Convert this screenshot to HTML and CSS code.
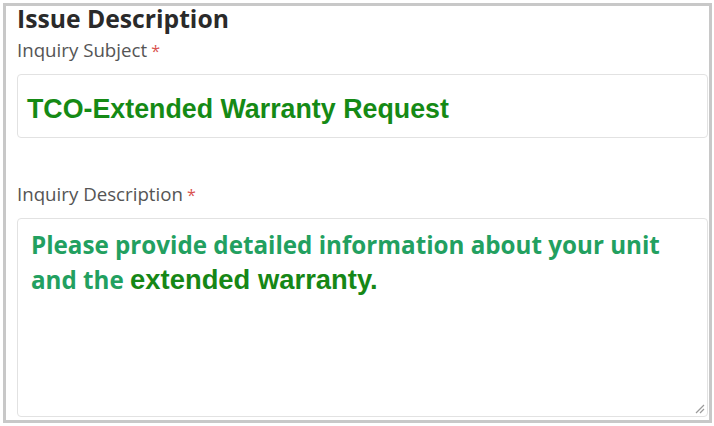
FILE: index.html
```html
<!DOCTYPE html>
<html>
  <head>
    <meta charset="utf-8" />
    <title>Issue Description</title>
    <link rel="stylesheet" href="styles.css">
  </head>
  <body>
    <div class="frame">
      <h2 class="title">Issue Description</h2>

      <div class="field">
        <label class="label">Inquiry Subject<span class="req">*</span></label>
        <div class="input">TCO-Extended Warranty Request</div>
      </div>

      <div class="field field-desc">
        <label class="label">Inquiry Description<span class="req">*</span></label>
        <div class="textarea">
          <p class="desc">Please provide detailed information about your unit<br />and the <span class="desc-alt">extended warranty.</span></p>
          <svg class="grip" width="12" height="12" viewBox="0 0 12 12">
            <path d="M11 3 L3 11 M11 7 L7 11" stroke="#9a9a9a" stroke-width="1.2" fill="none" />
          </svg>
        </div>
      </div>
    </div>
  </body>
</html>
```

FILE: styles.css
```css
html,
body {
  margin: 0;
  padding: 0;
  background: #fff;
}
.frame {
  box-sizing: border-box;
  margin: 3px 2px 0 3px;
  height: 420px;
  border: 3px solid #c8c8c8;
  padding: 0 1px 3px 11px;
  display: flex;
  flex-direction: column;
}
.title {
  margin: -1px 0 0 0;
  font-family: "Open Sans", sans-serif;
  font-size: 24.7px;
  font-weight: 700;
  line-height: 28px;
  color: #2a2a2a;
}
.label {
  display: block;
  margin-top: 5px;
  font-family: "Open Sans", sans-serif;
  font-size: 18.7px;
  line-height: 24px;
  color: #555;
}
.req {
  color: #d9534f;
  margin-left: 4px;
  font-size: 16px;
}
.input {
  box-sizing: border-box;
  margin-top: 11px;
  height: 64px;
  border: 1px solid #e2e2e2;
  border-radius: 4px;
  padding: 6px 9px 0;
  display: flex;
  align-items: center;
  font-family: "Liberation Sans", Arial, sans-serif;
  font-size: 26.8px;
  font-weight: 700;
  color: #158a15;
}
.field-desc {
  flex: 1;
  display: flex;
  flex-direction: column;
  margin-top: 39px;
}
.textarea {
  position: relative;
  flex: 1;
  margin-top: 11px;
  border: 1px solid #e2e2e2;
  border-radius: 4px;
  padding: 8px 13px;
}
.desc {
  margin: 0;
  font-family: "Open Sans", sans-serif;
  font-size: 24.2px;
  font-weight: 700;
  line-height: 35px;
  color: #22a060;
}
.desc-alt {
  font-family: "Liberation Sans", Arial, sans-serif;
  font-size: 27.4px;
  color: #168716;
}
.grip {
  position: absolute;
  right: 2px;
  bottom: 2px;
}
```
